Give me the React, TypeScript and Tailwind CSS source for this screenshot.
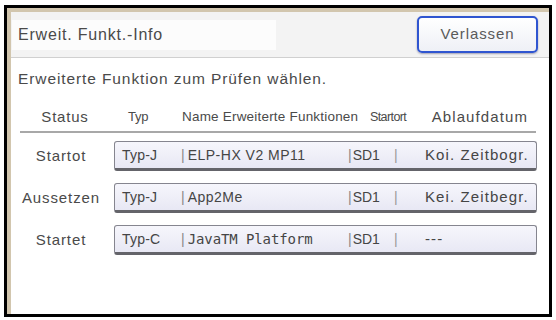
import React from "react";

const rows = [
  { status: "Startot", typ: "Typ-J", name: "ELP-HX V2 MP11", mono: false, date: "Koi. Zeitbogr." },
  { status: "Aussetzen", typ: "Typ-J", name: "App2Me", mono: false, date: "Kei. Zeitbegr." },
  { status: "Startet", typ: "Typ-C", name: "JavaTM Platform", mono: true, date: "---" },
];

export default function App() {
  return (
    <div className="w-[556px] h-[320px] bg-white overflow-hidden" style={{ fontFamily: '"Liberation Sans", Arial, sans-serif' }}>
      <div className="ml-[4px] mt-[5px] w-[548px] h-[312px] border-[3px] border-black">
        <div className="w-full h-full border-l-[4px] border-t-[4px] border-[#d2c6ae] bg-white flex flex-col text-[#4a4a4a]">
          {/* header */}
          <div className="h-[46px] shrink-0 bg-[#f3f3f3] border-b border-[#d0d0d0] flex items-center">
            <div className="ml-[1px] w-[264px] h-[30px] bg-[#fcfcfc] flex items-center pl-[6px] text-[16px] tracking-[0.8px] text-[#4a4a4a]">
              Erweit. Funkt.-Info
            </div>
            <div className="flex-1" />
            <div className="mr-[11px] w-[121px] h-[37px] rounded-[5px] border-2 border-[#2f55d0] bg-gradient-to-b from-white to-[#eef0f6] shadow-[0_1px_2px_rgba(0,0,60,0.35)] flex items-center justify-center text-[15px] tracking-[0.9px] text-[#5a5a5a]">
              Verlassen
            </div>
          </div>
          {/* instruction */}
          <div className="h-[41px] shrink-0 flex items-center pl-[7px] text-[15.5px] tracking-[0.9px] text-[#4a4a4a] whitespace-nowrap">
            Erweiterte Funktion zum Prüfen wählen.
          </div>
          {/* column header */}
          <div className="ml-[9px] w-[516px] h-[34px] shrink-0 border-b-2 border-[#a8a8a8] flex items-center pt-[4px] text-[13px] text-[#4a4a4a] whitespace-nowrap">
            <div className="w-[90px] text-center text-[15px] tracking-[0.8px]">Status</div>
            <div className="w-[70px] pl-[18px] tracking-[-0.2px]">Typ</div>
            <div className="w-[190px] pl-[2px] text-[13.5px] tracking-[0.2px]">Name Erweiterte Funktionen</div>
            <div className="w-[56px] text-[12.5px] tracking-[-0.6px]">Startort</div>
            <div className="flex-1 text-right pr-[8px] text-[15px] tracking-[1.1px]">Ablaufdatum</div>
          </div>
          {/* rows */}
          <div className="flex flex-col gap-[12px] mt-[8px]">
            {rows.map((r) => (
              <div key={r.status} className="flex items-center h-[30px]">
                <div className="w-[100px] text-center text-[15px] tracking-[0.9px] text-[#4a4a4a] whitespace-nowrap">{r.status}</div>
                <div className="ml-[3px] w-[423px] h-[30px] rounded-[3px] border border-[#85858f] border-b-[3px] border-b-[#64646a] bg-gradient-to-b from-[#f6f6fc] to-[#e8e8f4] flex items-center text-[14px] text-[#454545] whitespace-nowrap">
                  <div className="w-[66px] pl-[7px] tracking-[0.2px]">{r.typ}</div>
                  <div className="w-[167px] flex items-center">
                    <span className="text-[#888] mr-[3px]">|</span>
                    <span
                      className={r.mono ? "" : "tracking-[0.5px]"}
                      style={r.mono ? { fontFamily: '"DejaVu Sans Mono", monospace', fontSize: 14, letterSpacing: "-0.1px" } : undefined}
                    >
                      {r.name}
                    </span>
                  </div>
                  <div className="w-[70px] flex items-center">
                    <span className="text-[#888] mr-[1px]">|</span>
                    <span>SD1</span>
                    <span className="text-[#999] ml-[14px]">|</span>
                  </div>
                  <div className="flex-1 pl-[7px] text-[15px] tracking-[1.1px]">{r.date}</div>
                </div>
              </div>
            ))}
          </div>
        </div>
      </div>
    </div>
  );
}
